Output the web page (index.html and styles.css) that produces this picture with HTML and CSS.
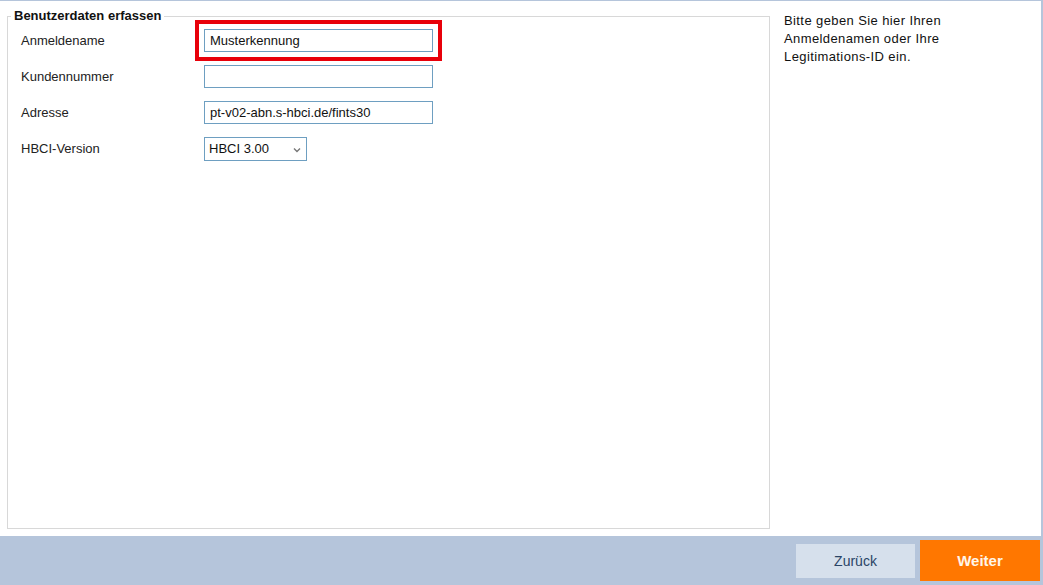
FILE: index.html
```html
<!DOCTYPE html>
<html lang="de">
<head>
<meta charset="utf-8">
<title>Benutzerdaten erfassen</title>
<link rel="stylesheet" href="styles.css">
</head>
<body>
<div class="page">
  <div class="main">
    <fieldset class="group">
      <legend class="group-title">Benutzerdaten erfassen</legend>
      <div class="form">
        <div class="row">
          <label class="label" for="login">Anmeldename</label>
          <input class="field field-highlight" id="login" type="text" value="Musterkennung">
        </div>
        <div class="row">
          <label class="label" for="kunde">Kundennummer</label>
          <input class="field" id="kunde" type="text" value="">
        </div>
        <div class="row">
          <label class="label" for="adresse">Adresse</label>
          <input class="field" id="adresse" type="text" value="pt-v02-abn.s-hbci.de/fints30">
        </div>
        <div class="row">
          <label class="label" for="version">HBCI-Version</label>
          <div class="select-wrap">
            <select class="select" id="version">
              <option>HBCI 3.00</option>
            </select>
            <svg class="chevron" width="8" height="6" viewBox="0 0 8 6"><path d="M1 1.5 L4 4.5 L7 1.5" fill="none" stroke="#777" stroke-width="1.4"/></svg>
          </div>
        </div>
      </div>
    </fieldset>
    <div class="help">
      <p class="help-text">Bitte geben Sie hier Ihren Anmeldenamen oder Ihre Legitimations-ID ein.</p>
    </div>
  </div>
  <div class="footer">
    <button class="btn btn-back" type="button">Zurück</button>
    <button class="btn btn-next" type="button">Weiter</button>
  </div>
</div>
</body>
</html>
```
FILE: styles.css
```css
* { box-sizing: border-box; }
html, body { margin: 0; padding: 0; }
body {
  background: #b5c5db;
  font-family: "Liberation Sans", Arial, sans-serif;
  font-size: 13px;
  color: #111;
  width: 1043px;
  height: 585px;
  overflow: hidden;
}
.page {
  display: flex;
  flex-direction: column;
  height: 585px;
  padding-top: 1px;
}
.main {
  background: #fff;
  height: 535px;
  margin-right: 2px;
  display: flex;
  align-items: flex-start;
}
.group {
  margin: 7px 0 0 7px;
  width: 763px;
  height: 521px;
  border: 1px solid #d8d8d8;
  padding: 0;
  min-width: 0;
}
.group-title {
  font-weight: bold;
  font-size: 13px;
  line-height: 16px;
  padding: 0 3px;
  margin-left: 3px;
  color: #111;
}
.form {
  display: flex;
  flex-direction: column;
  gap: 13px;
  padding: 5px 0 0 13px;
}
.row {
  display: flex;
  align-items: center;
  height: 23px;
}
.label {
  width: 183px;
  color: #222;
}
.field {
  width: 229px;
  height: 23px;
  border: 1px solid #6e9fc1;
  padding: 0 5px;
  font-family: "Liberation Sans", Arial, sans-serif;
  font-size: 13px;
  color: #111;
  background: #fff;
}
.field-highlight {
  outline: 4px solid #e8000a;
  outline-offset: 5px;
}
.select-wrap {
  position: relative;
  width: 103px;
  height: 24px;
}
.select {
  appearance: none;
  -webkit-appearance: none;
  width: 103px;
  height: 24px;
  border: 1px solid #6e9fc1;
  border-radius: 0;
  padding: 0 0 0 4px;
  font-family: "Liberation Sans", Arial, sans-serif;
  font-size: 13px;
  color: #111;
  background: #fff;
}
.chevron {
  position: absolute;
  right: 6px;
  top: 10px;
  pointer-events: none;
}
.help {
  flex: 1;
  padding: 11px 0 0 14px;
}
.help-text {
  margin: 0;
  width: 185px;
  line-height: 18px;
  letter-spacing: 0.4px;
  color: #111;
}
.footer {
  height: 49px;
  display: flex;
  align-items: center;
  justify-content: flex-end;
  gap: 5px;
  padding-right: 3px;
}
.btn {
  border: none;
  font-family: "Liberation Sans", Arial, sans-serif;
  font-size: 14px;
  cursor: pointer;
  padding: 0;
}
.btn-back {
  width: 119px;
  height: 34px;
  background: #d6e0ec;
  color: #2a4466;
}
.btn-next {
  width: 120px;
  height: 41px;
  background: #ff7700;
  color: #fff5e8;
  font-weight: bold;
  font-size: 15px;
}
```
